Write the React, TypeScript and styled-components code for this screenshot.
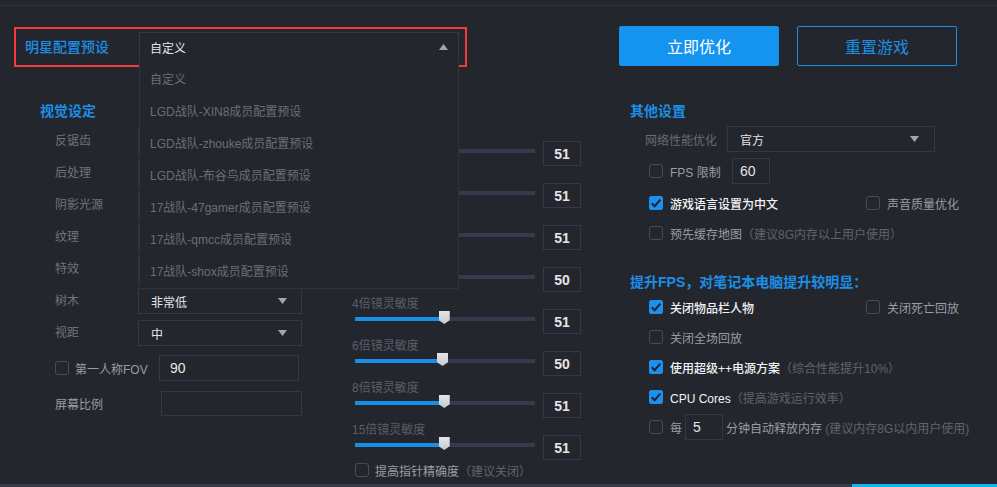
import React from "react";
import styled, { createGlobalStyle } from "styled-components";

const GlobalStyle = createGlobalStyle`
  html, body { margin: 0; padding: 0; background: #24262e; }
  body { font-family: "Liberation Sans", "Noto Sans CJK SC", sans-serif; }
  * { box-sizing: border-box; }
`;

const BLUE = "#1b8fe6";
const BORDER = "#343745";

const Root = styled.div`
  width: 997px;
  height: 487px;
  overflow: hidden;
  background: #24262e;
  display: flex;
  flex-direction: column;
  font-family: "Liberation Sans", "Noto Sans CJK SC", sans-serif;
  font-size: 12px;
  color: #9a9ca3;
`;

const TopRule = styled.div`
  margin-top: 5px;
  height: 1px;
  background: #30333e;
  flex: none;
`;

const Header = styled.div`
  display: flex;
  align-items: flex-start;
  padding: 20px 0 0 14px;
  flex: none;
`;

const PresetBox = styled.div`
  margin-top: 1px;
  width: 453px;
  height: 40px;
  border: 2px solid #f23b3b;
  display: flex;
  align-items: flex-start;
`;

const PresetLabel = styled.div`
  margin-left: 9px;
  width: 114px;
  line-height: 36px;
  font-size: 14px;
  font-weight: 500;
  color: ${BLUE};
`;

const SelectBox = styled.div<{ $w: number; $h: number; $pad?: number; $arrowGap?: number }>`
  position: relative;
  width: ${(p) => p.$w}px;
  height: ${(p) => p.$h}px;
  border: 1px solid ${BORDER};
  display: flex;
  align-items: center;
  justify-content: space-between;
  padding: 0 ${(p) => p.$arrowGap ?? 14}px 0 ${(p) => p.$pad ?? 12}px;
  font-size: 12px;
  color: #e4e5e8;
  flex: none;
`;

const HeadSelect = styled(SelectBox)`
  margin-top: 3px;
`;

const Menu = styled.div`
  position: absolute;
  top: 100%;
  left: -1px;
  width: 320px;
  padding-top: 3px;
  border: 1px solid #30333f;
  border-top: none;
  background: #24262e;
  z-index: 10;
`;

const MenuItem = styled.div`
  height: 32px;
  line-height: 32px;
  padding-left: 10px;
  font-size: 12px;
  color: #6b6e76;
  white-space: nowrap;
`;

const Button = styled.button<{ $primary?: boolean }>`
  width: 160px;
  height: 40px;
  border-radius: 2px;
  font-family: inherit;
  font-size: 16px;
  cursor: pointer;
  border: 1px solid ${BLUE};
  background: ${(p) => (p.$primary ? "#1493ef" : "transparent")};
  color: ${(p) => (p.$primary ? "#ffffff" : BLUE)};
  margin-left: ${(p) => (p.$primary ? 152 : 18)}px;
  flex: none;
`;

const Body = styled.div`
  flex: 1;
  display: grid;
  grid-template-columns: 300px 290px 1fr;
  padding: 34px 0 0 40px;
  min-height: 0;
`;

const Column = styled.div`
  display: flex;
  flex-direction: column;
`;

const Heading = styled.div`
  height: 20px;
  line-height: 20px;
  font-size: 14px;
  font-weight: 700;
  color: ${BLUE};
  white-space: nowrap;
`;

const SettingGrid = styled.div`
  margin-top: 7px;
  padding-left: 15px;
  display: grid;
  grid-template-columns: 83px 164px;
  row-gap: 5px;
`;

const DimLabel = styled.div`
  line-height: 27px;
  color: #71737b;
  white-space: nowrap;
`;

const Row = styled.div<{ $mt: number; $pl?: number; $h?: number }>`
  display: flex;
  align-items: center;
  margin-top: ${(p) => p.$mt}px;
  padding-left: ${(p) => p.$pl ?? 15}px;
  height: ${(p) => (p.$h ? `${p.$h}px` : "auto")};
  white-space: nowrap;
`;

const LabelCell = styled.div<{ $w: number; $color?: string }>`
  width: ${(p) => p.$w}px;
  flex: none;
  display: flex;
  align-items: center;
  color: ${(p) => p.$color ?? "#9a9ca3"};
`;

const Input = styled.div<{ $w: number; $h: number; $ml?: number }>`
  width: ${(p) => p.$w}px;
  height: ${(p) => p.$h}px;
  margin-left: ${(p) => p.$ml ?? 0}px;
  border: 1px solid ${BORDER};
  padding-left: 10px;
  display: flex;
  align-items: center;
  font-size: 14px;
  color: #e4e5e8;
  flex: none;
`;

const Box = styled.span<{ $checked?: boolean }>`
  width: 14px;
  height: 14px;
  flex: none;
  border-radius: ${(p) => (p.$checked ? 2 : 3)}px;
  border: 1px solid ${(p) => (p.$checked ? "#1c90ec" : "#494c57")};
  background: ${(p) => (p.$checked ? "#1c90ec" : "transparent")};
  display: inline-flex;
  align-items: center;
  justify-content: center;
`;

const CheckText = styled.span<{ $on?: boolean; $ml?: number }>`
  margin-left: ${(p) => p.$ml ?? 7}px;
  color: ${(p) => (p.$on ? "#f2f3f5" : "#9a9ca3")};
  font-weight: ${(p) => (p.$on ? 500 : 400)};
`;

const Hint = styled.span`
  color: #60636d;
  font-weight: 400;
`;

const SliderList = styled.div`
  margin-top: 7px;
  display: flex;
  flex-direction: column;
  gap: 4px;
`;

const SliderBlock = styled.div`
  display: flex;
  flex-direction: column;
`;

const SliderLabel = styled.div`
  height: 13px;
  line-height: 17px;
  padding-left: 12px;
  color: #5b5e69;
  white-space: nowrap;
`;

const SliderRow = styled.div`
  height: 25px;
  padding-left: 15px;
  display: flex;
  align-items: flex-start;
`;

const Track = styled.div`
  position: relative;
  margin-top: 8px;
  width: 180px;
  height: 4px;
  background: #363a4c;
  flex: none;
`;

const Fill = styled.div`
  height: 100%;
  background: #1a8fe8;
`;

const Thumb = styled.div`
  position: absolute;
  top: -6px;
  width: 11px;
  height: 13px;
  background: linear-gradient(#e3e5e8, #c6c9ce);
  clip-path: polygon(0 0, 100% 0, 100% 72%, 50% 100%, 0 72%);
`;

const ValueBox = styled.div`
  margin-left: 8px;
  width: 38px;
  height: 25px;
  border: 1px solid ${BORDER};
  display: flex;
  align-items: center;
  justify-content: center;
  font-size: 14px;
  font-weight: 700;
  color: #e4e5e8;
  flex: none;
`;

const PairCell = styled.div`
  width: 217px;
  display: flex;
  align-items: center;
  flex: none;
`;

const BottomBar = styled.div`
  flex: none;
  height: 3px;
  display: flex;
`;

const BarTrack = styled.div`
  flex: 1;
  background: #363a4b;
`;

const BarActive = styled.div`
  width: 145px;
  background: #11b4ef;
`;

const Arrow = ({ up }: { up?: boolean }) => (
  <svg width="9" height="6" viewBox="0 0 9 6">
    <polygon points={up ? "0,6 9,6 4.5,0" : "0,0 9,0 4.5,6"} fill="#a3a5ab" />
  </svg>
);

const Check = ({ on }: { on?: boolean }) => (
  <Box $checked={on}>
    {on && (
      <svg width="12" height="12" viewBox="0 0 12 12">
        <polyline points="1.8,6.2 4.6,9.2 10.4,2.6" fill="none" stroke="#1c2538" strokeWidth="2.1" />
      </svg>
    )}
  </Box>
);

const presets = [
  "自定义",
  "LGD战队-XIN8成员配置预设",
  "LGD战队-zhouke成员配置预设",
  "LGD战队-布谷鸟成员配置预设",
  "17战队-47gamer成员配置预设",
  "17战队-qmcc成员配置预设",
  "17战队-shox成员配置预设",
];

// values of the first rows sit under the open preset menu and are not shown
const visual = [
  ["反锯齿", ""],
  ["后处理", ""],
  ["阴影光源", ""],
  ["纹理", ""],
  ["特效", ""],
  ["树木", "非常低"],
  ["视距", "中"],
];

const sliders: [string, number][] = [
  ["普通灵敏度", 51],
  ["红点灵敏度", 51],
  ["2倍镜灵敏度", 51],
  ["3倍镜灵敏度", 50],
  ["4倍镜灵敏度", 51],
  ["6倍镜灵敏度", 50],
  ["8倍镜灵敏度", 51],
  ["15倍镜灵敏度", 51],
];

export default function App() {
  return (
    <Root>
      <GlobalStyle />
      <TopRule />
      <Header>
        <PresetBox>
          <PresetLabel>明星配置预设</PresetLabel>
          <HeadSelect $w={320} $h={30} $pad={10} $arrowGap={10}>
            <span>自定义</span>
            <Arrow up />
            <Menu>
              {presets.map((p) => (
                <MenuItem key={p}>{p}</MenuItem>
              ))}
            </Menu>
          </HeadSelect>
        </PresetBox>
        <Button $primary>立即优化</Button>
        <Button>重置游戏</Button>
      </Header>
      <Body>
        <Column>
          <Heading>视觉设定</Heading>
          <SettingGrid>
            {visual.map(([k, v]) => (
              <React.Fragment key={k}>
                <DimLabel>{k}</DimLabel>
                <SelectBox $w={164} $h={26}>
                  <span>{v}</span>
                  <Arrow />
                </SelectBox>
              </React.Fragment>
            ))}
          </SettingGrid>
          <Row $mt={8}>
            <LabelCell $w={104}>
              <Check />
              <CheckText $ml={6}>第一人称FOV</CheckText>
            </LabelCell>
            <Input $w={140} $h={26}>90</Input>
          </Row>
          <Row $mt={10}>
            <LabelCell $w={106}>屏幕比例</LabelCell>
            <Input $w={141} $h={25} />
          </Row>
        </Column>

        <Column>
          <Heading>操作设置</Heading>
          <SliderList>
            {sliders.map(([name, v]) => {
              const center = v * 1.75;
              return (
                <SliderBlock key={name}>
                  <SliderLabel>{name}</SliderLabel>
                  <SliderRow>
                    <Track>
                      <Fill style={{ width: `${center}px` }} />
                      <Thumb style={{ left: `${center - 5.5}px` }} />
                    </Track>
                    <ValueBox>{v}</ValueBox>
                  </SliderRow>
                </SliderBlock>
              );
            })}
          </SliderList>
          <Row $mt={2} $h={16}>
            <Check />
            <CheckText $ml={6}>
              提高指针精确度<Hint>（建议关闭）</Hint>
            </CheckText>
          </Row>
        </Column>

        <Column>
          <Heading>其他设置</Heading>
          <Row $mt={5}>
            <LabelCell $w={82} $color="#686b74">网络性能优化</LabelCell>
            <SelectBox $w={208} $h={26} $arrowGap={15}>
              <span>官方</span>
              <Arrow />
            </SelectBox>
          </Row>
          <Row $mt={6} $pl={19}>
            <LabelCell $w={83}>
              <Check />
              <CheckText>FPS 限制</CheckText>
            </LabelCell>
            <Input $w={38} $h={26} style={{ paddingLeft: 7 }}>60</Input>
          </Row>
          <Row $mt={4} $pl={19} $h={30}>
            <PairCell>
              <Check on />
              <CheckText $on>游戏语言设置为中文</CheckText>
            </PairCell>
            <Check />
            <CheckText>声音质量优化</CheckText>
          </Row>
          <Row $mt={0} $pl={19} $h={30}>
            <Check />
            <CheckText>
              预先缓存地图<Hint>（建议8G内存以上用户使用）</Hint>
            </CheckText>
          </Row>
          <Heading style={{ marginTop: 24 }}>提升FPS，对笔记本电脑提升较明显：</Heading>
          <Row $mt={0} $pl={19} $h={30}>
            <PairCell>
              <Check on />
              <CheckText $on>关闭物品栏人物</CheckText>
            </PairCell>
            <Check />
            <CheckText>关闭死亡回放</CheckText>
          </Row>
          <Row $mt={0} $pl={19} $h={30}>
            <Check />
            <CheckText>关闭全场回放</CheckText>
          </Row>
          <Row $mt={0} $pl={19} $h={30}>
            <Check on />
            <CheckText $on>
              使用超级++电源方案<Hint>（综合性能提升10%）</Hint>
            </CheckText>
          </Row>
          <Row $mt={0} $pl={19} $h={30}>
            <Check on />
            <CheckText $on>
              CPU Cores<Hint>（提高游戏运行效率）</Hint>
            </CheckText>
          </Row>
          <Row $mt={0} $pl={19} $h={30}>
            <Check />
            <CheckText>每</CheckText>
            <Input $w={38} $h={26} $ml={3} style={{ paddingLeft: 7 }}>5</Input>
            <CheckText $ml={3}>
              分钟自动释放内存 <Hint>(建议内存8G以内用户使用)</Hint>
            </CheckText>
          </Row>
        </Column>
      </Body>
      <BottomBar>
        <BarTrack />
        <BarActive />
      </BottomBar>
    </Root>
  );
}
